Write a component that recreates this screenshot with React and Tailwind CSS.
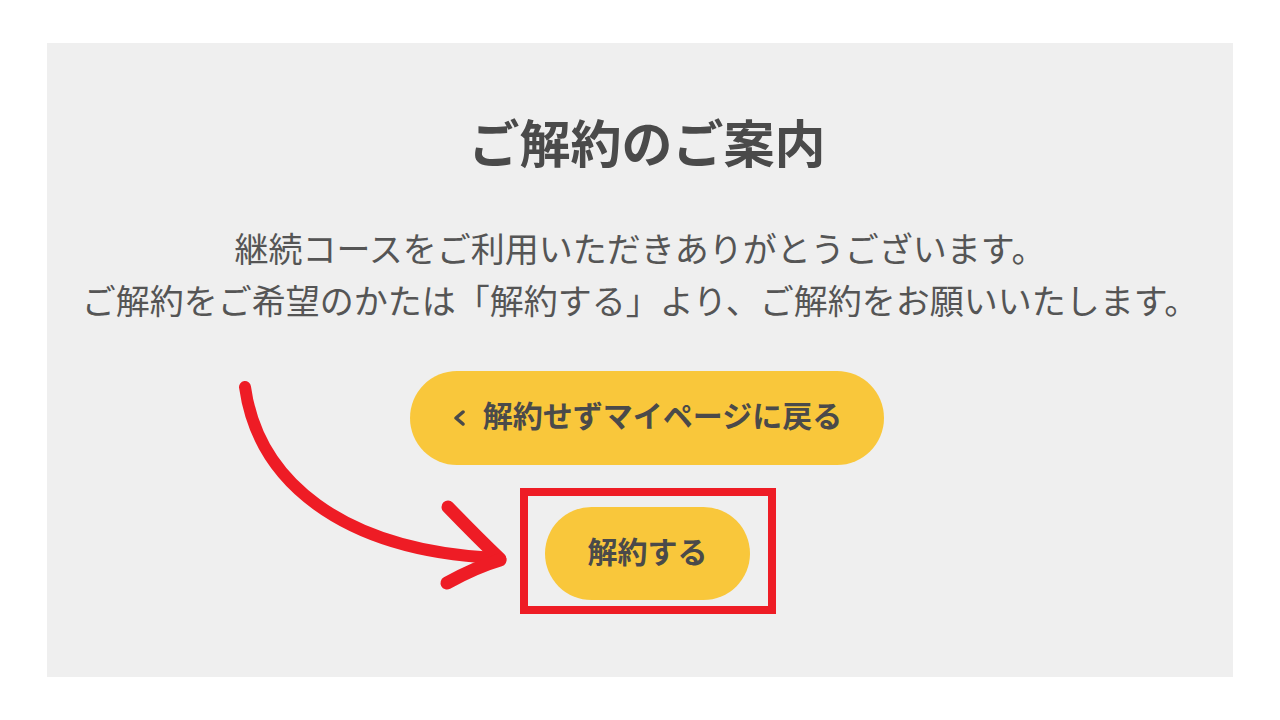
export default function App() {
  const font = { fontFamily: '"Noto Sans CJK JP", "Noto Sans", sans-serif' };
  return (
    <div className="relative w-[1280px] h-[720px] bg-white overflow-hidden" style={font}>
      <div className="ml-[47px] mt-[43px] w-[1186px] h-[634px] bg-[#efefef] flex flex-col items-center pt-[68px]">
        <h1 className="text-[51px] leading-[60px] font-bold text-[#4a4a4a] pl-[14px]">ご解約のご案内</h1>
        <div className="mt-[51px] text-[34px] leading-[52px] text-[#555555] text-center">
          <p>継続コースをご利用いただきありがとうございます。</p>
          <p>ご解約をご希望のかたは「解約する」より、ご解約をお願いいたします。</p>
        </div>
        <div className="mt-[45px] pl-[14px]">
          <div className="w-[474px] h-[94px] rounded-full bg-[#f9c73b] flex items-center justify-center gap-[17px] text-[#4a4a4a]">
            <svg width="14" height="16" viewBox="0 0 14 16" className="shrink-0">
              <path d="M11 2 L4 8 L11 14" fill="none" stroke="#4a4a4a" strokeWidth="3.5" strokeLinecap="round" strokeLinejoin="round" />
            </svg>
            <span className="text-[30px] font-bold leading-none pb-[8px]">解約せずマイページに戻る</span>
          </div>
        </div>
        <div className="mt-[23px] pl-[16px]">
          <div className="border-[8px] border-[#ee1c25] pt-[11px] pb-[6px] pl-[17px] pr-[18px]">
            <div className="w-[205px] h-[93px] rounded-full bg-[#f9c73b] flex items-center justify-center">
              <span className="text-[30px] font-bold leading-none text-[#4a4a4a] pb-[8px]">解約する</span>
            </div>
          </div>
        </div>
      </div>
      <svg className="absolute left-0 top-0 pointer-events-none" width="1280" height="720" viewBox="0 0 1280 720">
        <path d="M245 387 C 258 480, 340 550, 494 558" fill="none" stroke="#ee1c25" strokeWidth="12" strokeLinecap="round" />
        <path d="M448 507 Q 478 538 500 559" fill="none" stroke="#ee1c25" strokeWidth="13" strokeLinecap="round" />
        <path d="M447 583 Q 476 567 500 560" fill="none" stroke="#ee1c25" strokeWidth="13" strokeLinecap="round" />
      </svg>
    </div>
  );
}
